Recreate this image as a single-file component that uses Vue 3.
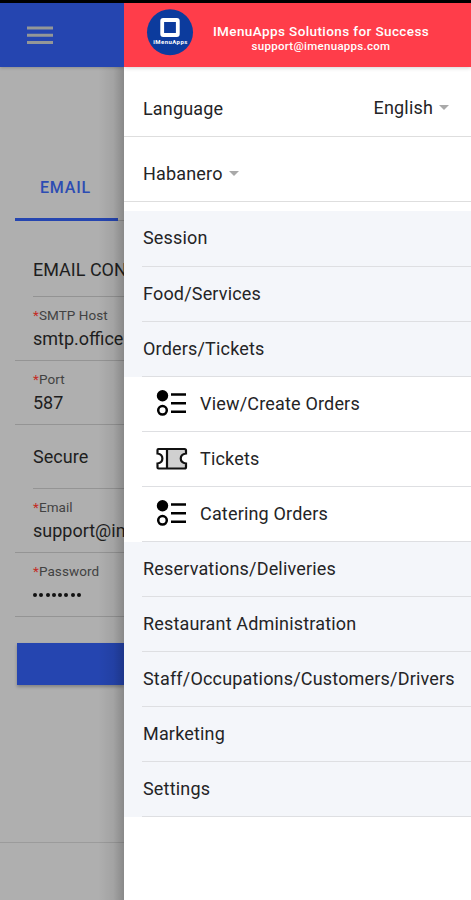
<script setup>
const menu = [
  { label: 'Session' },
  { label: 'Food/Services' },
  { label: 'Orders/Tickets' },
  { label: 'View/Create Orders', icon: 'list' },
  { label: 'Tickets', icon: 'ticket' },
  { label: 'Catering Orders', icon: 'list' },
  { label: 'Reservations/Deliveries' },
  { label: 'Restaurant Administration' },
  { label: 'Staff/Occupations/Customers/Drivers' },
  { label: 'Marketing' },
  { label: 'Settings' },
]
</script>

<template>
  <div class="screen">
    <div class="status"></div>
    <div class="body">
      <main class="page">
        <header class="bar">
          <svg width="26" height="19" viewBox="0 0 26 19">
            <path d="M0 2H26M0 9.300H26M0 16.600H26" stroke="#949797" stroke-width="3" />
          </svg>
        </header>
        <div class="tabs"><div class="tab">EMAIL</div><div class="track"></div></div>
        <section class="form">
          <h2 class="heading"><span>EMAIL CONFIGURATION</span></h2>
          <div class="field"><label><i>*</i>SMTP Host</label><div class="value">smtp.office</div></div>
          <div class="field"><label><i>*</i>Port</label><div class="value">587</div></div>
          <div class="toggle"><span>Secure</span></div>
          <div class="field"><label><i>*</i>Email</label><div class="value">support@imenuapps.com</div></div>
          <div class="field"><label><i>*</i>Password</label>
            <div class="dots"><b v-for="n in 8" :key="n"></b></div>
          </div>
        </section>
        <div class="button"></div>
        <footer class="foot"></footer>
        <div class="shade"></div>
      </main>
      <aside class="drawer">
        <header class="brand">
          <svg class="logo" width="48" height="48" viewBox="0 0 48 48">
            <circle cx="24" cy="24.300" r="23" fill="#0c3b9d" />
            <rect x="16.200" y="12" width="15.600" height="15" rx="1" fill="none" stroke="#fff" stroke-width="3.800" />
            <text x="24.300" y="35.700" text-anchor="middle" textLength="34" lengthAdjust="spacing" class="logotext">iMenuApps</text>
          </svg>
          <div class="brandtext">
            <div class="title">IMenuApps Solutions for Success</div>
            <div class="mail">support@imenuapps.com</div>
          </div>
        </header>
        <div class="select language">
          <span>Language</span>
          <span class="choice">English<em class="caret"></em></span>
        </div>
        <div class="select venue">
          <span class="choice">Habanero<em class="caret"></em></span>
        </div>
        <nav class="menu">
          <div v-for="m in menu" :key="m.label" class="row" :class="{ sub: m.icon }">
            <div class="inner">
              <svg v-if="m.icon === 'list'" class="icon" width="32" height="28" viewBox="0 0 32 28">
                <circle cx="6.500" cy="6.700" r="5.700" />
                <circle cx="6.500" cy="21.300" r="4.300" fill="none" stroke="#000" stroke-width="2.500" />
                <path d="M15 5.600H30M15 14.200H30M15 22.800H30" stroke="#000" stroke-width="2.500" />
              </svg>
              <svg v-if="m.icon === 'ticket'" class="icon" width="32" height="28" viewBox="0 0 32 28">
                <path d="M11 5H28.500Q30 5 30 6.500V9.500C23 10.500 23 18.500 30 19.500V23Q30 24.500 28.500 24.500H11Z" fill="#d0d0d0" />
                <path d="M2.500 5H28.500Q30 5 30 6.500V9.500C23 10.500 23 18.500 30 19.500V23Q30 24.500 28.500 24.500H2.500Q1.500 24.500 1.500 23.500V19.500C8 18.500 8 10.500 1.500 9.500V6Q1.500 5 2.500 5ZM11 5V24.500" fill="none" stroke="#111" stroke-width="2.200" />
              </svg>
              <span>{{ m.label }}</span>
            </div>
          </div>
        </nav>
      </aside>
    </div>
  </div>
</template>

<style>
body { margin: 0; background: #fff; }
</style>
<style scoped>
* { box-sizing: border-box; }
.screen { width: 471px; height: 900px; overflow: hidden; display: flex; flex-direction: column; font-family: Roboto, sans-serif; font-size: 18px; color: #242426; letter-spacing: 0.18px; }
.status { height: 3px; background: #000; flex: none; }
.body { flex: 1; display: flex; min-height: 0; }
.page { width: 124px; flex: none; position: relative; overflow: hidden; background: #afafaf; color: #1e1e1e; display: flex; flex-direction: column; white-space: nowrap; }
.bar { height: 64px; flex: none; background: #2545b0; padding: 23px 0 0 27px; box-shadow: 0 1px 3px rgba(0,0,0,.2); }
.bar svg { display: block; }
.tabs { flex: none; height: 154px; padding: 87px 0 0 15px; display: flex; align-items: flex-end; }
.tab { flex: none; width: 103px; height: 67px; border-bottom: 3px solid #2545b0; color: #2c4cb3; font-size: 16px; font-weight: 500; letter-spacing: .8px; line-height: 67px; padding-left: 25px; }
.track { flex: 1; height: 1px; background: #949494; }
.form { flex: none; padding-left: 15px; }
.heading { margin: 0; padding-left: 18px; height: 76px; font-size: 18px; font-weight: 400; line-height: 97px; letter-spacing: 0; }
.heading span { display: block; height: 76px; border-bottom: 1px solid #939393; }
.field { height: 64px; padding: 8px 0 0 18px; border-bottom: 1px solid #949494; }
.field label { display: block; font-size: 13.500px; line-height: 20px; color: #424242; letter-spacing: 0.080px; }
.field i { color: #c42b25; font-style: normal; }
.value { line-height: 28px; letter-spacing: 0; }
.toggle { height: 64px; padding-left: 18px; line-height: 63px; letter-spacing: .05px; }
.toggle span { display: block; height: 64px; border-bottom: 1px solid #949494; }
.dots { display: flex; gap: 2.300px; padding-top: 12px; }
.dots b { width: 4px; height: 4px; border-radius: 50%; background: #111; }
.button { height: 42px; flex: none; margin: 26px 0 0 17px; background: #2545b0; box-shadow: 0 2px 3px rgba(0,0,0,.25); }
.foot { margin-top: auto; height: 58px; border-top: 1px solid #9b9b9b; }
.shade { position: absolute; top: 64px; right: 0; bottom: 0; width: 26px; background: linear-gradient(to right, transparent, rgba(0,0,0,.07) 60%, rgba(0,0,0,.22)); }
.drawer { flex: 1; min-width: 0; background: #fff; display: flex; flex-direction: column; }
.brand { height: 64px; flex: none; background: #ff3d4a; color: #fff; display: flex; padding: 5px 0 0 22px; box-shadow: 0 1px 4px rgba(0,0,0,.18); }
.logo { flex: none; display: block; }
.logotext { font-family: Roboto, sans-serif; font-size: 6px; font-weight: 700; fill: #fff; letter-spacing: 0; }
.brandtext { width: 254px; padding-top: 16px; text-align: center; font-weight: 500; }
.title { font-size: 13.500px; line-height: 15px; letter-spacing: .4px; }
.mail { font-size: 11.500px; line-height: 14px; letter-spacing: .28px; }
.select { flex: none; display: flex; justify-content: space-between; align-items: center; padding: 0 22px 0 19px; border-bottom: 1px solid #dedede; }
.language { height: 70px; padding-top: 13px; }
.language .choice { padding-bottom: 2px; }
.venue { height: 65px; padding-top: 8px; }
.choice { display: flex; align-items: center; gap: 6px; }
.caret { border: 5px solid transparent; border-top: 5.500px solid #a9a9a9; border-bottom: 0; }
.menu { margin-top: 9px; }
.row { height: 55px; background: #f4f6fa; padding-left: 18px; }
.row:first-child { height: 56px; }
.inner { height: 100%; display: flex; align-items: center; border-bottom: 1px solid #dedfe2; padding: 0 0 2px 1px; white-space: nowrap; }
.sub { background: #fff; }
.sub .inner { padding-left: 14px; gap: 12px; }
.icon { flex: none; }
</style>
